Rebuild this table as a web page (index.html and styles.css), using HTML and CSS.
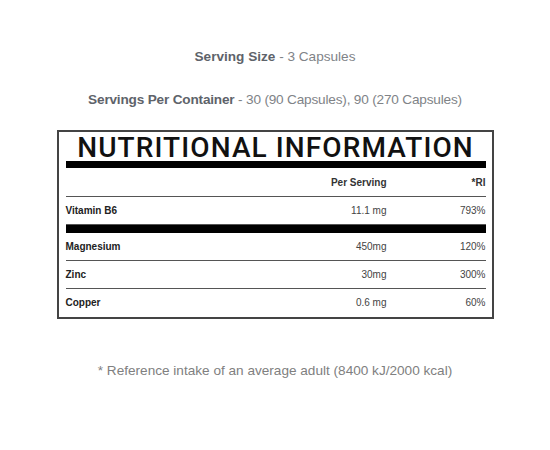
FILE: index.html
```html
<!DOCTYPE html>
<html lang="en">
<head>
    <meta charset="UTF-8">
    <meta name="viewport" content="width=device-width, initial-scale=1.0">
    <title>Nutritional Information</title>
    <link rel="stylesheet" href="styles.css">
</head>
<body>
    <div class="serving">
        <p class="serving-line"><strong>Serving Size</strong> - 3 Capsules</p>
        <p class="serving-line serving-long"><strong>Servings Per Container</strong> - 30 (90 Capsules), 90 (270 Capsules)</p>
    </div>
    <div class="label">
        <h1 class="label-title">NUTRITIONAL INFORMATION</h1>
        <div class="row row-head thick-top">
            <span></span>
            <span class="amount">Per Serving</span>
            <span class="ri">*RI</span>
        </div>
        <div class="row">
            <span class="name">Vitamin B6</span>
            <span class="amount">11.1 mg</span>
            <span class="ri">793%</span>
        </div>
        <div class="row thick-top">
            <span class="name">Magnesium</span>
            <span class="amount">450mg</span>
            <span class="ri">120%</span>
        </div>
        <div class="row">
            <span class="name">Zinc</span>
            <span class="amount">30mg</span>
            <span class="ri">300%</span>
        </div>
        <div class="row">
            <span class="name">Copper</span>
            <span class="amount">0.6 mg</span>
            <span class="ri">60%</span>
        </div>
    </div>
    <p class="footnote">* Reference intake of an average adult (8400 kJ/2000 kcal)</p>
</body>
</html>
```

FILE: styles.css
```css
body {
    margin: 0;
    padding-top: 47px;
    background: #ffffff;
    font-family: "Liberation Sans", Arial, sans-serif;
    display: flex;
    flex-direction: column;
    align-items: center;
}
.serving {
    display: flex;
    flex-direction: column;
    gap: 23px;
    margin-bottom: 20px;
}
.serving-line {
    margin: 0;
    text-align: center;
    font-size: 13.6px;
    line-height: 20px;
    color: #808387;
}
.serving-long {
    letter-spacing: -0.18px;
}
.serving-line strong {
    color: #5e636a;
}
.label {
    width: 420px;
    border: 2px solid #444;
    padding: 3px 6px 1px 7px;
}
.label-title {
    margin: 0;
    font-family: Roboto, "Liberation Sans", sans-serif;
    font-weight: 500;
    font-size: 28px;
    line-height: 26px;
    letter-spacing: 1.1px;
    text-align: center;
    color: #111;
}
.row {
    display: grid;
    grid-template-columns: 1fr 120px 99px;
    align-items: center;
    height: 27px;
    border-bottom: 1px solid #555;
    font-size: 10px;
    color: #444;
}
.row:last-child {
    border-bottom: none;
}
.row-head {
    height: 28px;
    font-weight: 700;
    color: #333;
}
.thick-top {
    border-top: 7px solid #000;
}
.row.thick-top:not(.row-head) {
    border-top-width: 8px;
}
.name {
    font-weight: 700;
    color: #222;
}
.amount, .ri {
    text-align: right;
}
.footnote {
    margin: 42px 0 0;
    font-size: 13.6px;
    line-height: 20px;
    color: #808080;
}
```
